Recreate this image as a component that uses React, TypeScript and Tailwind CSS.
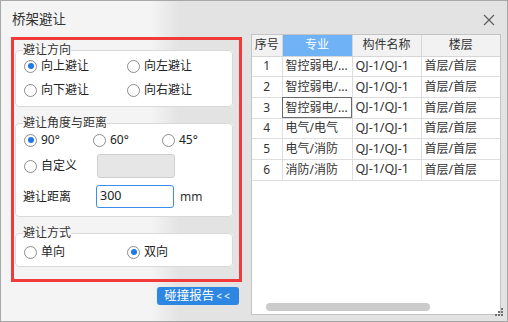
import React from 'react';

const Radio = ({ checked }: { checked?: boolean }) => (
  <span className="w-[13px] h-[13px] rounded-full border border-[#8c8c8c] bg-white flex items-center justify-center shrink-0">
    {checked && <span className="w-[6px] h-[6px] rounded-full bg-[#1f78e4]" />}
  </span>
);

const Option = ({ label, checked }: { label: string; checked?: boolean }) => (
  <label className="flex items-center gap-[4px] h-4 text-[12px] leading-4 text-[#222]">
    <Radio checked={checked} />
    {label}
  </label>
);

const Group = ({ title, children, className = '' }: { title: string; children: React.ReactNode; className?: string }) => (
  <fieldset className={`border border-[#d9d9d9] rounded-[4px] bg-white pl-[8px] pr-[8px] ${className}`}>
    <legend className="-ml-[1px] text-[12px] leading-[16px] text-[#333]">{title}</legend>
    {children}
  </fieldset>
);

const rows = [
  { no: 1, major: '智控弱电/...', name: 'QJ-1/QJ-1', floor: '首层/首层' },
  { no: 2, major: '智控弱电/...', name: 'QJ-1/QJ-1', floor: '首层/首层' },
  { no: 3, major: '智控弱电/...', name: 'QJ-1/QJ-1', floor: '首层/首层', focus: true },
  { no: 4, major: '电气/电气', name: 'QJ-1/QJ-1', floor: '首层/首层' },
  { no: 5, major: '电气/消防', name: 'QJ-1/QJ-1', floor: '首层/首层' },
  { no: 6, major: '消防/消防', name: 'QJ-1/QJ-1', floor: '首层/首层' },
];

const App = () => {
  return (
    <div className="relative w-[508px] h-[322px] border border-[#a8a8a8] bg-[linear-gradient(to_right,#f4f4f4_150px,#e3e3e3_178px)] flex flex-col font-['Noto_Sans','Noto_Sans_CJK_SC',sans-serif] text-[#222] overflow-hidden">
      {/* Title bar */}
      <div className="h-[33px] flex items-start justify-between pl-[11px] pr-[12px] pt-[9px]">
        <span className="text-[13.5px] leading-[18px] text-[#333]">桥架避让</span>
        <svg width="12" height="12" viewBox="0 0 12 12" className="mt-[4px]">
          <path d="M1 1 L11 11 M11 1 L1 11" stroke="#5a5a5a" strokeWidth="1.1" />
        </svg>
      </div>

      {/* Body */}
      <div className="h-[281px] flex pl-[10px] pr-[6px]">
        {/* Left panel */}
        <div className="w-[231px] pt-[3px] flex flex-col">
          <div className="h-[245px] border-[3px] border-[#f23a3a] pl-[1px] pr-[6px] pt-[2px] flex flex-col">
            <Group title="避让方向" className="pb-[8px]">
              <div className="grid grid-cols-[103px_auto] gap-y-[8px]">
                <Option label="向上避让" checked />
                <Option label="向左避让" />
                <Option label="向下避让" />
                <Option label="向右避让" />
              </div>
            </Group>

            <Group title="避让角度与距离" className="mt-[8px] pb-[8px]">
              <div className="mt-[1px] grid grid-cols-[69px_69px_auto]">
                <Option label="90°" checked />
                <Option label="60°" />
                <Option label="45°" />
              </div>
              <div className="mt-[6px] flex items-center h-[24px]">
                <div className="w-[73px]">
                  <Option label="自定义" />
                </div>
                <div className="w-[78px] h-[24px] rounded-[3px] border border-[#cfcfcf] bg-[#e6e6e6]" />
              </div>
              <div className="mt-[7px] flex items-center h-[23px]">
                <span className="w-[73px] -ml-[1px] text-[12px] text-[#222]">避让距离</span>
                <div className="w-[78px] h-[23px] rounded-[3px] border border-[#3b8ded] bg-white flex items-center pl-[3px] text-[12.5px] text-[#222]">
                  300
                </div>
                <span className="ml-[6px] text-[12px] text-[#333]">mm</span>
              </div>
            </Group>

            <Group title="避让方式" className="mt-[8px] pb-[6px]">
              <div className="mt-[3px] grid grid-cols-[103px_auto]">
                <Option label="单向" />
                <Option label="双向" checked />
              </div>
            </Group>
          </div>

          <div className="mt-[5px] flex justify-end pr-[3px]">
            <button className="w-[82px] h-[18px] rounded-[3px] bg-[#2d86e2] text-white text-[12.5px] leading-[18px] flex items-center justify-center">
              碰撞报告<span className="ml-[2px] text-[10px] tracking-[2px]">&lt;&lt;</span>
            </button>
          </div>
        </div>

        {/* Right table */}
        <div className="ml-[9px] w-[250px] h-[281px] border border-[#c4c4c4] bg-white flex flex-col">
          <table className="table-fixed border-collapse text-[12px] text-[#333]">
            <colgroup>
              <col className="w-[30px]" />
              <col className="w-[70px]" />
              <col className="w-[69px]" />
              <col className="w-[79px]" />
            </colgroup>
            <thead>
              <tr className="h-[21px]">
                <th className="border-r border-b border-[#d6d6d6] bg-[#f2f2f2] font-normal">序号</th>
                <th className="border-r border-b border-[#d6d6d6] bg-[#70b2f6] text-white font-normal">专业</th>
                <th className="border-r border-b border-[#d6d6d6] bg-[#f2f2f2] font-normal">构件名称</th>
                <th className="border-b border-[#d6d6d6] bg-[#f2f2f2] font-normal">楼层</th>
              </tr>
            </thead>
            <tbody>
              {rows.map((r) => (
                <tr key={r.no} className="h-[20.7px]">
                  <td className="border-r border-b border-[#dedede] text-center">{r.no}</td>
                  <td
                    className={`border-r border-b border-[#dedede] pl-[3px] whitespace-nowrap overflow-hidden ${
                      r.focus ? 'outline outline-1 -outline-offset-1 outline-[#6a6a6a]' : ''
                    }`}
                  >
                    {r.major}
                  </td>
                  <td className="border-r border-b border-[#dedede] pl-[3px] whitespace-nowrap text-[12.5px]">{r.name}</td>
                  <td className="border-b border-[#dedede] pl-[3px] whitespace-nowrap">{r.floor}</td>
                </tr>
              ))}
            </tbody>
          </table>
          <div className="flex-1" />
          <div className="ml-[14px] mb-[3px] w-[164px] h-[8px] rounded-full bg-[#cbcbcb]" />
        </div>
      </div>

      {/* Resize grip */}
      <svg width="9" height="9" viewBox="0 0 9 9" className="absolute right-[3px] bottom-[4px]">
        <rect x="6" y="0" width="2" height="2" fill="#707070" />
        <rect x="3" y="3" width="2" height="2" fill="#707070" />
        <rect x="6" y="3" width="2" height="2" fill="#707070" />
        <rect x="0" y="6" width="2" height="2" fill="#707070" />
        <rect x="3" y="6" width="2" height="2" fill="#707070" />
        <rect x="6" y="6" width="2" height="2" fill="#707070" />
      </svg>
    </div>
  );
};

export default App;
